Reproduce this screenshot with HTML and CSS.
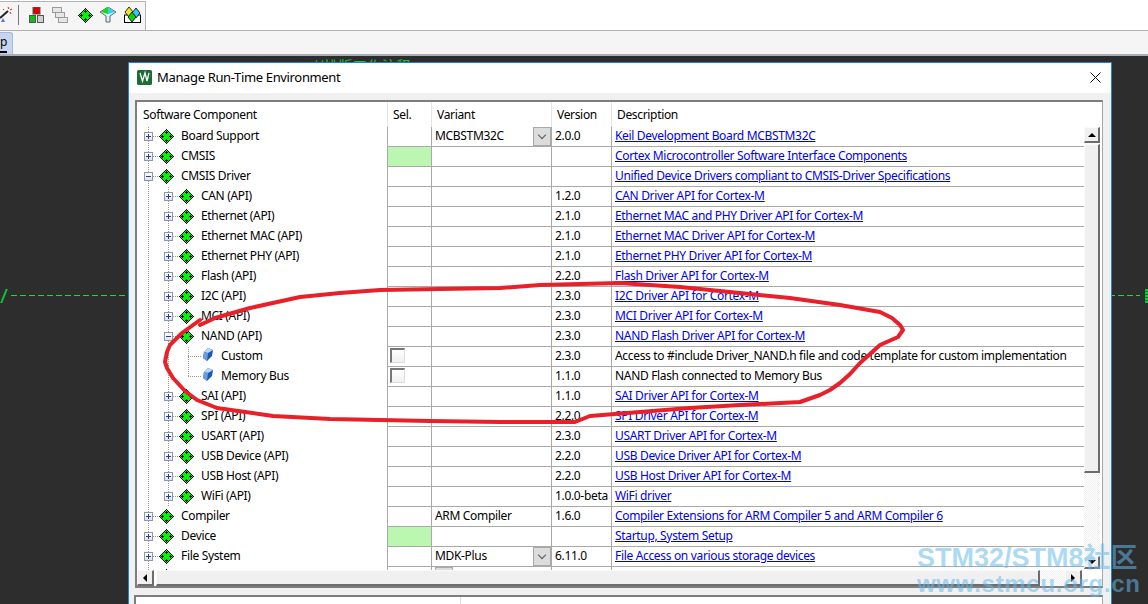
FILE: index.html
```html
<!DOCTYPE html>
<html lang="en">
<head>
<meta charset="utf-8">
<title>Manage Run-Time Environment</title>
<link rel="stylesheet" href="styles.css">
</head>
<body>
<svg class="defs" width="0" height="0" aria-hidden="true">
  <symbol id="dia" viewBox="0 0 15 15">
    <polygon points="7.500,0.500 14.500,7.500 7.500,14.500 0.500,7.500" fill="#00f800" stroke="#000" stroke-width="1" shape-rendering="crispEdges"/>
    <path d="M6 3h3v1H6zM7 2h1v3H7zM6 11h3v1H6zM7 10h1v3H7zM2 7h3v1H2zM3 6h1v3H3zM10 7h3v1h-3zM11 6h1v3h-1z" fill="#000"/>
  </symbol>
  <symbol id="gem" viewBox="0 0 10 13">
    <polygon points="5,0 10,2 9,8 4,13 0,10 1,4" fill="#1d56b4"/>
    <polygon points="5,0 10,2 5,5 1,4" fill="#bcd6f4"/>
    <polygon points="1,4 5,5 4,13 0,10" fill="#6a9ee0"/>
  </symbol>
</svg>
<header class="toolbar">
  <div class="tool-group">
    <svg class="tool wand" width="13" height="18" viewBox="0 0 13 18"><path d="M0 12L8 5" stroke="#222" stroke-width="2"/><path d="M8 1l1 2M12 3l-2 1M11 8l-1-2M3 3l1 1" stroke="#c22" stroke-width="1"/><path d="M1 16h4l-2-4z" fill="#4a7fd0"/></svg>
    <span class="tool-sep"></span>
    <svg class="tool" width="15" height="16" viewBox="0 0 15 16"><rect x="4" y="0" width="7" height="7" fill="#e00000" stroke="#555"/><rect x="0.5" y="8.5" width="6" height="7" fill="#10c010" stroke="#555"/><rect x="8.5" y="8.5" width="6" height="7" fill="#d0d0d0" stroke="#555"/></svg>
    <svg class="tool" width="16" height="16" viewBox="0 0 16 16" fill="#e6e6e6" stroke="#9a9a9a"><rect x="0.5" y="0.5" width="9" height="5"/><rect x="3.5" y="5.5" width="9" height="5"/><rect x="6.5" y="10.5" width="9" height="5"/></svg>
    <svg class="tool tool-dia" width="15" height="15"><use href="#dia"/></svg>
    <svg class="tool tool-filter" width="16" height="16" viewBox="0 0 16 16"><polygon points="0,5 8,0 16,5 10,9 10,15 6,15 6,9" fill="#d8f0f8" stroke="#444" stroke-width=".8"/><polygon points="1,5 8,0 8,7" fill="#10e010"/><polygon points="8,0 15,5 8,7" fill="#30d0f0"/></svg>
    <svg class="tool" width="17" height="16" viewBox="0 0 17 16"><rect x="0.5" y="8" width="16" height="7.500" fill="#fff" stroke="#000"/><polygon points="5,0 9,5 5,10 1,5" fill="#e8e820" stroke="#000" stroke-width=".8"/><polygon points="12,1 16,6 12,11 8,6" fill="#30c8f0" stroke="#000" stroke-width=".8"/><polygon points="8,5 12,10 8,15 4,10" fill="#10d010" stroke="#000" stroke-width=".8"/></svg>
  </div>
</header>
<nav class="tabs"><span class="tab"><span class="tab-key">p</span></span></nav>
<main class="workspace">
  <span class="code-stray">//排版工作注释</span>
  <span class="dash"></span>
  <span class="slash slash-left"></span>
  <span class="glyph-right"></span>
  <section class="dialog">
    <div class="titlebar">
      <svg class="app-icon" width="15" height="15" viewBox="0 0 15 15"><rect width="15" height="15" rx="1.500" fill="#1f6b35"/><path d="M3 3l2.500 8L8 3l2 8 2-8" stroke="#fff" stroke-width="1.300" fill="none"/></svg>
      <span class="title">Manage Run-Time Environment</span>
      <svg class="close" width="11" height="11" viewBox="0 0 11 11"><path d="M0.500 0.500l10 10M10.500 0.500l-10 10" stroke="#111" stroke-width="1"/></svg>
    </div>
    <div class="client">
      <div class="panel">
        <div class="heads">
          <span>Software Component</span><span class="h-sel">Sel.</span><span class="h-var">Variant</span><span class="h-ver">Version</span><span class="h-desc">Description</span>
        </div>
        <div class="body">
          <div class="rows">
            <div class="row"><div class="tree t1"><span class="exp plus"></span><svg class="dia"><use href="#dia"/></svg><span>Board Support</span></div><div class="c"></div><div class="c var">MCBSTM32C<span class="drop"><i></i></span></div><div class="c">2.0.0</div><div class="c"><a href="#">Keil Development Board MCBSTM32C</a></div></div>
            <div class="row"><div class="tree t1"><span class="exp plus"></span><svg class="dia"><use href="#dia"/></svg><span>CMSIS</span></div><div class="c ok"></div><div class="c"></div><div class="c"></div><div class="c"><a href="#">Cortex Microcontroller Software Interface Components</a></div></div>
            <div class="row"><div class="tree t1"><span class="exp minus"></span><svg class="dia"><use href="#dia"/></svg><span>CMSIS Driver</span></div><div class="c"></div><div class="c"></div><div class="c"></div><div class="c"><a href="#">Unified Device Drivers compliant to CMSIS-Driver Specifications</a></div></div>
            <div class="row"><div class="tree t2"><span class="exp plus"></span><svg class="dia"><use href="#dia"/></svg><span>CAN (API)</span></div><div class="c"></div><div class="c"></div><div class="c">1.2.0</div><div class="c"><a href="#">CAN Driver API for Cortex-M</a></div></div>
            <div class="row"><div class="tree t2"><span class="exp plus"></span><svg class="dia"><use href="#dia"/></svg><span>Ethernet (API)</span></div><div class="c"></div><div class="c"></div><div class="c">2.1.0</div><div class="c"><a href="#">Ethernet MAC and PHY Driver API for Cortex-M</a></div></div>
            <div class="row"><div class="tree t2"><span class="exp plus"></span><svg class="dia"><use href="#dia"/></svg><span>Ethernet MAC (API)</span></div><div class="c"></div><div class="c"></div><div class="c">2.1.0</div><div class="c"><a href="#">Ethernet MAC Driver API for Cortex-M</a></div></div>
            <div class="row"><div class="tree t2"><span class="exp plus"></span><svg class="dia"><use href="#dia"/></svg><span>Ethernet PHY (API)</span></div><div class="c"></div><div class="c"></div><div class="c">2.1.0</div><div class="c"><a href="#">Ethernet PHY Driver API for Cortex-M</a></div></div>
            <div class="row"><div class="tree t2"><span class="exp plus"></span><svg class="dia"><use href="#dia"/></svg><span>Flash (API)</span></div><div class="c"></div><div class="c"></div><div class="c">2.2.0</div><div class="c"><a href="#">Flash Driver API for Cortex-M</a></div></div>
            <div class="row"><div class="tree t2"><span class="exp plus"></span><svg class="dia"><use href="#dia"/></svg><span>I2C (API)</span></div><div class="c"></div><div class="c"></div><div class="c">2.3.0</div><div class="c"><a href="#">I2C Driver API for Cortex-M</a></div></div>
            <div class="row"><div class="tree t2"><span class="exp plus"></span><svg class="dia"><use href="#dia"/></svg><span>MCI (API)</span></div><div class="c"></div><div class="c"></div><div class="c">2.3.0</div><div class="c"><a href="#">MCI Driver API for Cortex-M</a></div></div>
            <div class="row"><div class="tree t2"><span class="exp minus"></span><svg class="dia"><use href="#dia"/></svg><span>NAND (API)</span></div><div class="c"></div><div class="c"></div><div class="c">2.3.0</div><div class="c"><a href="#">NAND Flash Driver API for Cortex-M</a></div></div>
            <div class="row"><div class="tree t3"><span class="conn"></span><svg class="gem"><use href="#gem"/></svg><span>Custom</span></div><div class="c"><span class="check"></span></div><div class="c"></div><div class="c">2.3.0</div><div class="c">Access to #include Driver_NAND.h file and code template for custom implementation</div></div>
            <div class="row"><div class="tree t3 last"><span class="conn"></span><svg class="gem"><use href="#gem"/></svg><span>Memory Bus</span></div><div class="c"><span class="check"></span></div><div class="c"></div><div class="c">1.1.0</div><div class="c">NAND Flash connected to Memory Bus</div></div>
            <div class="row"><div class="tree t2"><span class="exp plus"></span><svg class="dia"><use href="#dia"/></svg><span>SAI (API)</span></div><div class="c"></div><div class="c"></div><div class="c">1.1.0</div><div class="c"><a href="#">SAI Driver API for Cortex-M</a></div></div>
            <div class="row"><div class="tree t2"><span class="exp plus"></span><svg class="dia"><use href="#dia"/></svg><span>SPI (API)</span></div><div class="c"></div><div class="c"></div><div class="c">2.2.0</div><div class="c"><a href="#">SPI Driver API for Cortex-M</a></div></div>
            <div class="row"><div class="tree t2"><span class="exp plus"></span><svg class="dia"><use href="#dia"/></svg><span>USART (API)</span></div><div class="c"></div><div class="c"></div><div class="c">2.3.0</div><div class="c"><a href="#">USART Driver API for Cortex-M</a></div></div>
            <div class="row"><div class="tree t2"><span class="exp plus"></span><svg class="dia"><use href="#dia"/></svg><span>USB Device (API)</span></div><div class="c"></div><div class="c"></div><div class="c">2.2.0</div><div class="c"><a href="#">USB Device Driver API for Cortex-M</a></div></div>
            <div class="row"><div class="tree t2"><span class="exp plus"></span><svg class="dia"><use href="#dia"/></svg><span>USB Host (API)</span></div><div class="c"></div><div class="c"></div><div class="c">2.2.0</div><div class="c"><a href="#">USB Host Driver API for Cortex-M</a></div></div>
            <div class="row"><div class="tree t2"><span class="exp plus"></span><svg class="dia"><use href="#dia"/></svg><span>WiFi (API)</span></div><div class="c"></div><div class="c"></div><div class="c">1.0.0-beta</div><div class="c"><a href="#">WiFi driver</a></div></div>
            <div class="row"><div class="tree t1"><span class="exp plus"></span><svg class="dia"><use href="#dia"/></svg><span>Compiler</span></div><div class="c"></div><div class="c var">ARM Compiler</div><div class="c">1.6.0</div><div class="c"><a href="#">Compiler Extensions for ARM Compiler 5 and ARM Compiler 6</a></div></div>
            <div class="row"><div class="tree t1"><span class="exp plus"></span><svg class="dia"><use href="#dia"/></svg><span>Device</span></div><div class="c ok"></div><div class="c"></div><div class="c"></div><div class="c"><a href="#">Startup, System Setup</a></div></div>
            <div class="row"><div class="tree t1"><span class="exp plus"></span><svg class="dia"><use href="#dia"/></svg><span>File System</span></div><div class="c"></div><div class="c var">MDK-Plus<span class="drop"><i></i></span></div><div class="c">6.11.0</div><div class="c"><a href="#">File Access on various storage devices</a></div></div>
            <div class="row"><div class="tree t1"><span class="exp plus"></span><svg class="dia"><use href="#dia"/></svg></div><div class="c"></div><div class="c var"><span class="drop"><i></i></span></div><div class="c"></div><div class="c"></div></div>
          </div>
          <div class="vscroll">
            <span class="sb-btn v"><i class="arr up"></i></span>
            <span class="sb-thumb v-thumb"></span>
            <span class="track"></span>
            <span class="sb-btn v-down"><i class="arr down"></i></span>
          </div>
        </div>
        <div class="hscroll">
          <span class="sb-btn h"><i class="arr left"></i></span>
          <span class="sb-thumb h-thumb"></span>
          <span class="track"></span>
          <span class="sb-btn h"><i class="arr right"></i></span>
          <span class="corner"></span>
        </div>
      </div>
      <div class="lower"><span class="lower-a"></span></div>
    </div>
  </section>
  <svg class="ink" width="1148" height="604" viewBox="0 0 1148 604"><path d="M200 325L215 318L250 308L300 297L340 293L380 290L440 289L500 288L540 285L620 283L680 287L740 293L790 298L840 305L880 312L892 318L900 325L903 330L898 337L880 345L870 354L860 363L850 374L840 383L830 390L820 395L800 402L740 405L690 408L640 412L590 416L575 422L500 422L430 421L330 419L273 416L217 408L197 400L185 391L173 378L167 368L165 362L167 352L170 345L182 333L200 320" /></svg>
  <div class="mark"><span class="mark-a">STM32/STM8社区</span><span class="mark-b">www.stmcu.org.cn</span></div>
</main>
</body>
</html>
```
FILE: styles.css
```css
* { box-sizing: border-box; }
html, body { margin: 0; height: 100%; }
body {
  width: 1148px;
  height: 604px;
  overflow: hidden;
  display: flex;
  flex-direction: column;
  font: 12px/16px "Noto Sans", Tahoma, sans-serif;
  letter-spacing: -0.33px;
  color: #000;
  background: #2d2d2d;
}
.defs { position: absolute; }

.toolbar {
  height: 31px;
  flex: none;
  background: #fff;
  border-top: 1px solid #fff;
  border-bottom: 1px solid #b0b0b0;
}
.tool-group {
  width: 146px;
  height: 29px;
  padding-bottom: 2px;
  display: flex;
  align-items: center;
  gap: 8px;
  background: #f5f5f5;
  border-top: 1px solid #b4b4b4;
  border-right: 1px solid #b4b4b4;
}
.tool { flex: none; }
.wand { margin-right: -3px; }
.tool-sep { width: 1px; height: 20px; margin: 0 2px 0 0; background: #777; }
.tool-dia { margin-left: 2px; }
.tool-filter { margin-left: -1px; }

.tabs {
  height: 25px;
  flex: none;
  display: flex;
  background: #f5f5f5;
  border-bottom: 2px solid #a9aeb8;
}
.tab {
  width: 13px;
  height: 22px;
  margin-top: 1px;
  background: #c6d6f2;
  border: 1px solid #aab8d0;
  border-left: 0;
  border-bottom: 0;
  border-radius: 0 3px 0 0;
  line-height: 18px;
  overflow: hidden;
}
.tab-key { display: block; width: 7px; border-bottom: 2px solid #000; height: 20px; }

.workspace {
  position: relative;
  flex: 1;
  min-height: 0;
  padding: 6px 0 0 128px;
  background: #2d2d2d;
  overflow: hidden;
}
.code-stray {
  position: absolute;
  left: 312px;
  top: 0;
  height: 6px;
  overflow: hidden;
  font: 14px/18px "Noto Sans CJK SC", sans-serif;
  letter-spacing: 0.500px;
  white-space: nowrap;
  color: #12c83a;
}
.dash {
  position: absolute;
  left: 11px;
  right: 8px;
  top: 239px;
  height: 1px;
  background: repeating-linear-gradient(to right, #1fd84a 0 6px, transparent 6px 9px);
}
.slash {
  position: absolute;
  left: 3px;
  top: 233px;
  width: 2px;
  height: 14px;
  background: #12c83a;
  transform: skewX(-22deg);
}
.glyph-right {
  position: absolute;
  left: 1145px;
  top: 233px;
  width: 3px;
  height: 14px;
  background: repeating-linear-gradient(to bottom, #12c83a 0 2px, #0a7a25 2px 3px);
}

.dialog {
  position: relative;
  width: 984px;
  height: 560px;
  background: #f0f0f0;
  border: 1px solid #1b84d8;
  border-bottom: 0;
}
.titlebar {
  height: 30px;
  display: flex;
  align-items: center;
  padding: 0 10px 2px 8px;
  background: #fff;
}
.app-icon { flex: none; }
.title { margin-left: 5px; font-size: 13px; letter-spacing: -0.35px; flex: 1; }
.close { flex: none; }

.client { padding: 7px 8px 0 6px; }
.panel {
  height: 488px;
  display: flex;
  flex-direction: column;
  padding-right: 2px;
  background: #fff;
  border-top: 2px solid #7d7d7d;
  border-left: 2px solid #7d7d7d;
  border-right: 1px solid #a8a8a8;
  border-bottom: 2px solid #7d7d7d;
}
.heads {
  height: 25px;
  flex: none;
  display: grid;
  grid-template-columns: 250px 44px 120px 60px 473px;
  align-items: stretch;
  line-height: 25px;
  padding-top: 0;
}
.heads span { padding-left: 6px; white-space: nowrap; }
.heads .h-sel, .heads .h-var, .heads .h-ver, .heads .h-desc { border-left: 1px solid #e4e4e4; padding-left: 5px; }

.body { flex: 1; min-height: 0; display: flex; }
.rows { width: 947px; overflow: hidden; }
.row {
  display: grid;
  grid-template-columns: 250px 44px 120px 60px 473px;
  height: 20px;
}
.c {
  position: relative;
  border-left: 1px solid #a9a9a9;
  border-bottom: 1px solid #a9a9a9;
  padding-left: 3px;
  line-height: 18px;
  white-space: nowrap;
  overflow: hidden;
}
.ok { background: #bbf7b0; }
.var { display: flex; justify-content: space-between; padding-right: 0; }
a { color: #0000ee; }

.tree {
  display: flex;
  align-items: center;
  height: 20px;
  padding-bottom: 2px;
  white-space: nowrap;
  background-repeat: no-repeat;
}
.dia { width: 15px; height: 15px; margin-right: 7px; flex: none; }
.gem { width: 10px; height: 13px; margin: -3px 8px 0 0; flex: none; }
.exp {
  position: relative;
  width: 9px;
  height: 9px;
  margin-right: 6px;
  flex: none;
  border: 1px solid #8c98a8;
  background:
    linear-gradient(#24418c, #24418c) center / 5px 1px no-repeat,
    linear-gradient(#fff, #dfe3ea);
}
.exp::after {
  content: "";
  position: absolute;
  left: 8px;
  top: 3px;
  width: 6px;
  height: 1px;
  background: repeating-linear-gradient(to right, #999 0 1px, transparent 1px 2px);
}
.plus {
  background:
    linear-gradient(#24418c, #24418c) center / 5px 1px no-repeat,
    linear-gradient(#24418c, #24418c) center / 1px 5px no-repeat,
    linear-gradient(#fff, #dfe3ea);
}
.t1 { padding-left: 7px; }
.t2 { padding-left: 27px; }
.t3 { padding-left: 51px; }
.t1, .t2, .t3 {
  background-image:
    repeating-linear-gradient(to bottom, #999 0 1px, transparent 1px 2px),
    repeating-linear-gradient(to bottom, #999 0 1px, transparent 1px 2px),
    repeating-linear-gradient(to bottom, #999 0 1px, transparent 1px 2px);
  background-size: 1px 100%;
}
.t1 { background-position: 11px 0, -9px 0, -9px 0; }
.t2 { background-position: 11px 0, 31px 0, -9px 0; }
.t3 { background-position: 11px 0, 31px 0, 51px 0; }
.t3.last { background-size: 1px 100%, 1px 100%, 1px 50%; }
.conn {
  width: 14px;
  height: 1px;
  flex: none;
  margin-right: 1px;
  background: repeating-linear-gradient(to right, #999 0 1px, transparent 1px 2px);
}
.check {
  display: block;
  width: 15px;
  height: 15px;
  margin: 1px 0 0 -1px;
  background: linear-gradient(#fff, #f0f0f0);
  border: 1px solid #dcdcdc;
  border-top: 2px solid #777;
  border-left: 2px solid #777;
}
.drop {
  width: 18px;
  height: 19px;
  flex: none;
  display: flex;
  align-items: center;
  justify-content: center;
  background: #dcdcdc;
  border: 1px solid #a9a9a9;
}
.drop i {
  width: 6px;
  height: 6px;
  margin-top: -3px;
  border-right: 1px solid #555;
  border-bottom: 1px solid #555;
  transform: rotate(45deg);
}

.vscroll { width: 16px; flex: none; display: flex; flex-direction: column; }
.hscroll { height: 16px; flex: none; display: flex; }
.sb-btn, .sb-thumb {
  flex: none;
  display: flex;
  align-items: center;
  justify-content: center;
  background: #f0f0f0;
  border-top: 1px solid #fafafa;
  border-left: 1px solid #fafafa;
  border-right: 2px solid #6c6c6c;
  border-bottom: 2px solid #6c6c6c;
}
.v { height: 16px; margin-bottom: 1px; }
.v-thumb { height: 329px; }
.v-down { height: 13px; margin-bottom: 1px; }
.h { width: 17px; }
.h-thumb { width: 884px; margin-left: 2px; }
.track {
  flex: 1;
  background: repeating-conic-gradient(#f0f0f0 0 25%, #fff 0 50%) 0 0 / 2px 2px;
}
.corner { width: 18px; flex: none; background: #fff; }
.arr { width: 0; height: 0; border: 4px solid transparent; }
.up { border-bottom: 4px solid #000; border-top: 0; }
.down { border-top: 4px solid #000; border-bottom: 0; }
.left { border-right: 4px solid #000; border-left: 0; }
.right { border-left: 4px solid #000; border-right: 0; }

.lower {
  height: 40px;
  margin: 7px 0 0 -1px;
  background: #fff;
  border-top: 2px solid #7d7d7d;
  border-left: 2px solid #7d7d7d;
  border-right: 1px solid #a8a8a8;
  padding-left: 324px;
}
.lower-a { display: block; height: 100%; border-left: 1px solid #ddd; }

.ink { position: absolute; left: 0; top: -56px; pointer-events: none; }
.ink path { fill: none; stroke: #e8202a; stroke-width: 4; stroke-linejoin: round; stroke-linecap: round; }

.mark {
  position: absolute;
  left: 917px;
  top: 489px;
  display: flex;
  flex-direction: column;
  color: rgba(100, 185, 235, 0.55);
  font-family: "Liberation Sans", "Noto Sans CJK SC", sans-serif;
  font-weight: 700;
  letter-spacing: 0;
  white-space: nowrap;
}
.mark-a { font-size: 27px; line-height: 27px; }
.mark-b { font-size: 24px; line-height: 24px; letter-spacing: 0.7px; }
```
